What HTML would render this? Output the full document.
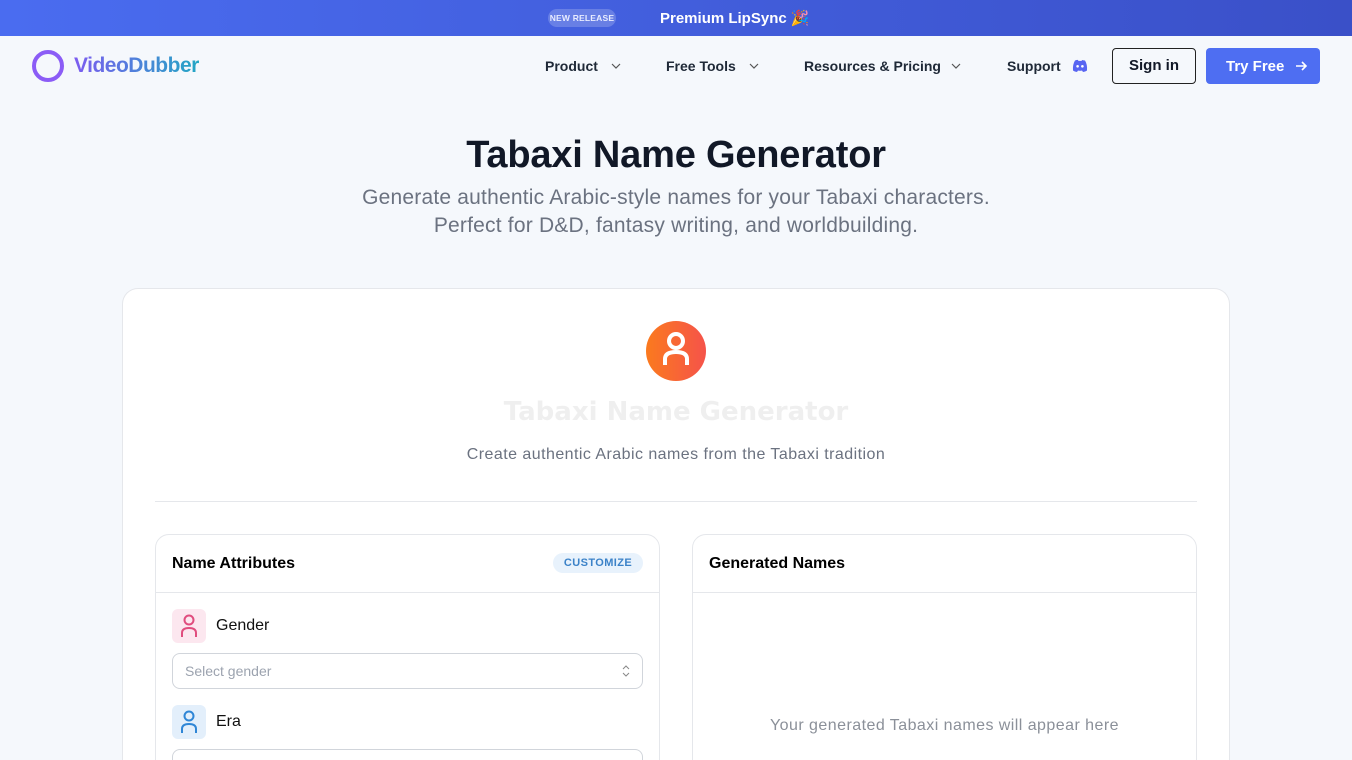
<!DOCTYPE html>
<html><head><meta charset="utf-8"><style>
*{box-sizing:border-box;margin:0;padding:0}
html,body{width:1352px;height:760px;overflow:hidden}
body{background:#f5f8fc;font-family:"Liberation Sans",sans-serif;color:#111827;position:relative}
.top{position:absolute;left:0;top:0;width:1352px;height:36px;background:linear-gradient(90deg,#4a6cf0,#3a50c8);color:#fff}
.badge{position:absolute;left:548px;top:9px;width:68px;height:18px;border-radius:9px;background:rgba(255,255,255,.2);font-size:8.5px;font-weight:bold;letter-spacing:.2px;text-align:center;line-height:18px;color:#e8ecff;white-space:nowrap}
.top .t{position:absolute;left:660px;top:9px;font-size:15px;font-weight:bold}
.nav{position:absolute;top:36px;left:0;width:1352px;height:84px;background:#f5f8fc}
.logo{position:absolute;left:32px;top:14px;width:32px;height:32px;border:4px solid #8b5cf6;border-radius:50%}
.brand{position:absolute;left:74px;top:18px;font-size:21px;font-weight:bold;background:linear-gradient(90deg,#7c5cf0,#22a6c4);-webkit-background-clip:text;color:transparent;letter-spacing:-.5px}
.ni{position:absolute;top:22px;font-size:14px;font-weight:bold;color:#1f2937;white-space:nowrap}
.chev{position:absolute;top:24px;width:12px;height:12px}
.btn1{position:absolute;left:1112px;top:12px;width:84px;height:36px;border:1px solid #222;border-radius:4px;font-size:15px;font-weight:bold;text-align:center;line-height:34px}
.btn2{position:absolute;left:1206px;top:12px;width:114px;height:36px;background:#4e6ef2;border-radius:4px;color:#fff;font-size:15px;font-weight:bold;display:flex;align-items:center;padding-left:20px;white-space:nowrap}
h1{position:absolute;left:0;width:1352px;top:134px;text-align:center;font-size:38px;font-weight:bold;color:#111827;letter-spacing:-.2px}
.sub{position:absolute;left:0;width:1352px;top:184px;text-align:center;font-size:21px;line-height:28px;color:#6b7280;letter-spacing:.2px}
.card{position:absolute;left:122px;top:288px;width:1108px;height:472px;background:#fff;border:1px solid #e5e7eb;border-bottom:none;border-radius:16px 16px 0 0;overflow:hidden}
.av{position:absolute;left:523px;top:32px;width:60px;height:60px;border-radius:50%;background:linear-gradient(90deg,#fb7a1e,#f5534a)}
.t2{position:absolute;left:0;width:1106px;top:108px;text-align:center;font-family:"DejaVu Sans",sans-serif;font-weight:bold;font-size:26px;color:#efefef}
.d2{position:absolute;left:0;width:1106px;top:157px;text-align:center;font-size:16px;color:#6b7280;letter-spacing:.45px}
.hr{position:absolute;left:32px;width:1042px;top:212px;height:1px;background:#e5e7eb}
.pan{position:absolute;top:245px;width:505px;height:260px;border:1px solid #e5e7eb;border-radius:14px;background:#fff}
.ph{height:58px;border-bottom:1px solid #e5e7eb;padding:20px 16px;font-size:16px;font-weight:bold;color:#000}
.cust{position:absolute;right:16px;top:18px;width:90px;height:20px;border-radius:10px;background:#e8f2fc;color:#3b82c8;font-size:11px;font-weight:bold;text-align:center;line-height:20px;letter-spacing:.4px}
.ic{position:absolute;left:16px;width:34px;height:34px;border-radius:6px}
.lab{position:absolute;left:60px;font-size:16px;color:#111}
.sel{position:absolute;left:16px;width:471px;height:36px;border:1px solid #d1d5db;border-radius:8px;font-size:14px;color:#9ca3af;padding:9px 12px}
</style></head><body>
<div class="top"><div class="badge">NEW RELEASE</div><div class="t">Premium LipSync 🎉</div></div>
<div class="nav">
<div class="logo"></div><div class="brand">VideoDubber</div>
<div class="ni" style="left:545px">Product</div>
<svg class="chev" style="left:610px" viewBox="0 0 12 12"><path d="M2 4l4 4 4-4" fill="none" stroke="#555" stroke-width="1.2"/></svg>
<div class="ni" style="left:666px">Free Tools</div>
<svg class="chev" style="left:748px" viewBox="0 0 12 12"><path d="M2 4l4 4 4-4" fill="none" stroke="#555" stroke-width="1.2"/></svg>
<div class="ni" style="left:804px">Resources &amp; Pricing</div>
<svg class="chev" style="left:950px" viewBox="0 0 12 12"><path d="M2 4l4 4 4-4" fill="none" stroke="#555" stroke-width="1.2"/></svg>
<div class="ni" style="left:1007px">Support</div>
<svg style="position:absolute;left:1072px;top:23px" width="16" height="14" viewBox="0 0 16 14"><path d="M3 1.5Q5.5 0.5 6 1L6.5 2Q8 1.8 9.5 2L10 1Q12.5 1.5 13 1.5Q15.5 5.5 15 11.5Q13 13 11 13L10 11.5Q8 12 6 11.5L5 13Q3 13 1 11.5Q.5 5.5 3 1.5Z" fill="#5865f2"/><circle cx="5.6" cy="7.3" r="1.3" fill="#fff"/><circle cx="10.4" cy="7.3" r="1.3" fill="#fff"/></svg>
<div class="btn1">Sign in</div>
<div class="btn2">Try Free<svg style="margin-left:10px" width="14" height="14" viewBox="0 0 14 14"><path d="M2 7h10M8 3l4 4-4 4" fill="none" stroke="#fff" stroke-width="1.6"/></svg></div>
</div>
<h1>Tabaxi Name Generator</h1>
<div class="sub">Generate authentic Arabic-style names for your Tabaxi characters.<br>Perfect for D&amp;D, fantasy writing, and worldbuilding.</div>
<div class="card">
<div class="av"><svg width="60" height="60" viewBox="0 0 60 60"><circle cx="30" cy="20" r="7" fill="none" stroke="#fff" stroke-width="4"/><path d="M19 44V38Q19 31 30 31Q41 31 41 38V44" fill="none" stroke="#fff" stroke-width="4"/></svg></div>
<div class="t2">Tabaxi Name Generator</div>
<div class="d2">Create authentic Arabic names from the Tabaxi tradition</div>
<div class="hr"></div>
<div class="pan" style="left:32px"><div class="ph">Name Attributes</div><div class="cust">CUSTOMIZE</div>
<div class="ic" style="top:74px;background:#fce7ef"><svg width="34" height="34" viewBox="0 0 34 34"><circle cx="17" cy="11" r="4.5" fill="none" stroke="#e04d7e" stroke-width="2"/><path d="M10 28V24Q10 19 17 19Q24 19 24 24V28" fill="none" stroke="#e04d7e" stroke-width="2"/></svg></div>
<div class="lab" style="top:82px">Gender</div>
<div class="sel" style="top:118px">Select gender<svg style="position:absolute;right:12px;top:11px" width="8" height="12" viewBox="0 0 8 12"><path d="M1 4l3-3 3 3M1 8l3 3 3-3" fill="none" stroke="#888" stroke-width="1"/></svg></div>
<div class="ic" style="top:170px;background:#e3effb"><svg width="34" height="34" viewBox="0 0 34 34"><circle cx="17" cy="11" r="4.5" fill="none" stroke="#2f86d6" stroke-width="2"/><path d="M10 28V24Q10 19 17 19Q24 19 24 24V28" fill="none" stroke="#2f86d6" stroke-width="2"/></svg></div>
<div class="lab" style="top:178px">Era</div>
<div class="sel" style="top:214px"></div>
</div>
<div class="pan" style="left:569px"><div class="ph">Generated Names</div>
<div style="position:absolute;left:0;width:503px;top:182px;text-align:center;font-size:16px;color:#8b9099;letter-spacing:.45px">Your generated Tabaxi names will appear here</div></div>
</div>
</body></html>
